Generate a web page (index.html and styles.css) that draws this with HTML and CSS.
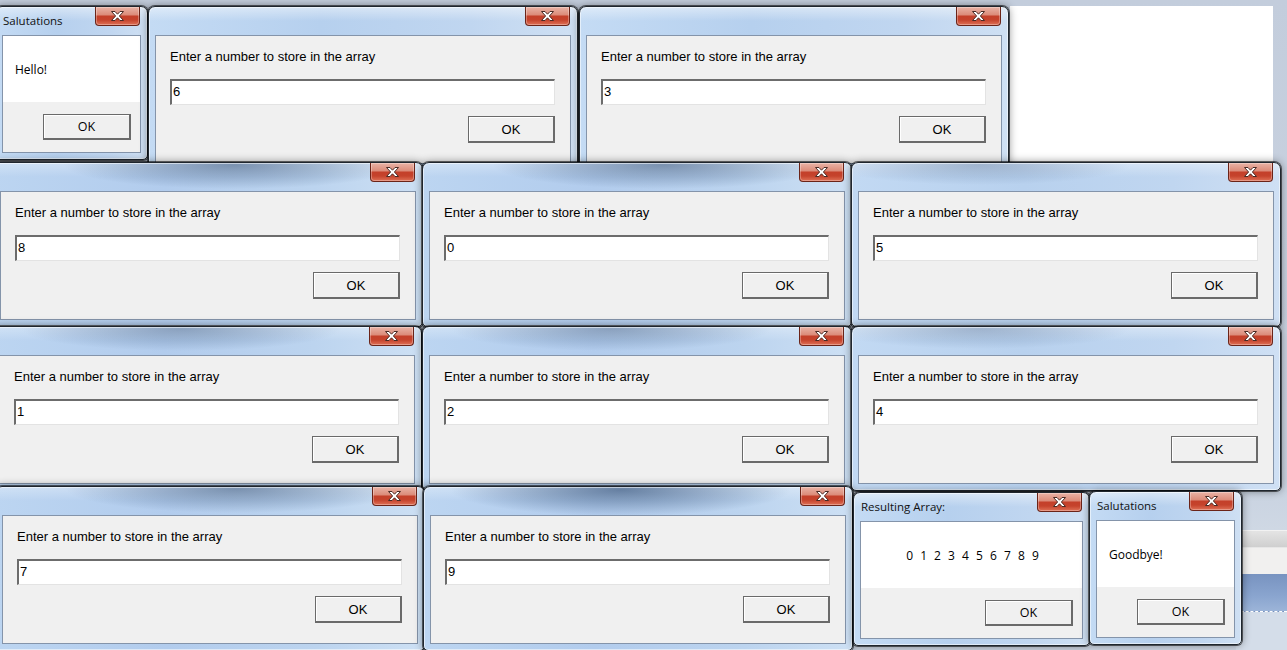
FILE: index.html
```html
<!DOCTYPE html>
<html lang="en">
<head>
<meta charset="utf-8">
<title>Array input dialogs</title>
<link rel="stylesheet" href="styles.css">
</head>
<body>
<div class="desktop">
  <div class="bg-white"></div>
  <div class="bg-app">
    <div class="app-top"></div>
    <div class="app-strip"></div>
    <div class="app-page"></div>
    <div class="app-band"></div>
    <div class="app-bottom"></div>
  </div>

  <!-- Row 1 -->
  <div class="win msg w1">
    <div class="titlebar"><span class="title">Salutations</span>
      <span class="close"><svg width="13" height="10" viewBox="0 0 13 10"><polygon points="0.5,0.5 4,0.5 6.5,3.2 9,0.5 12.5,0.5 8.4,5 12.5,9.5 9,9.5 6.5,6.8 4,9.5 0.5,9.5 4.6,5"/></svg></span></div>
    <div class="client">
      <div class="msg-body"><span>Hello!</span></div>
      <div class="msg-foot"><span class="btn">OK</span></div>
    </div>
  </div>

  <div class="win dlg w2">
    <div class="titlebar"><span class="close"><svg width="13" height="10" viewBox="0 0 13 10"><polygon points="0.5,0.5 4,0.5 6.5,3.2 9,0.5 12.5,0.5 8.4,5 12.5,9.5 9,9.5 6.5,6.8 4,9.5 0.5,9.5 4.6,5"/></svg></span></div>
    <div class="client">
      <p class="label">Enter a number to store in the array</p>
      <div class="field">6</div>
      <div class="actions"><span class="btn">OK</span></div>
    </div>
  </div>

  <div class="win dlg w3">
    <div class="titlebar"><span class="close"><svg width="13" height="10" viewBox="0 0 13 10"><polygon points="0.5,0.5 4,0.5 6.5,3.2 9,0.5 12.5,0.5 8.4,5 12.5,9.5 9,9.5 6.5,6.8 4,9.5 0.5,9.5 4.6,5"/></svg></span></div>
    <div class="client">
      <p class="label">Enter a number to store in the array</p>
      <div class="field">3</div>
      <div class="actions"><span class="btn">OK</span></div>
    </div>
  </div>

  <!-- Row 2 -->
  <div class="win dlg glass ga w4">
    <div class="titlebar"><span class="close"><svg width="13" height="10" viewBox="0 0 13 10"><polygon points="0.5,0.5 4,0.5 6.5,3.2 9,0.5 12.5,0.5 8.4,5 12.5,9.5 9,9.5 6.5,6.8 4,9.5 0.5,9.5 4.6,5"/></svg></span></div>
    <div class="client">
      <p class="label">Enter a number to store in the array</p>
      <div class="field">8</div>
      <div class="actions"><span class="btn">OK</span></div>
    </div>
  </div>

  <div class="win dlg glass ga w5">
    <div class="titlebar"><span class="close"><svg width="13" height="10" viewBox="0 0 13 10"><polygon points="0.5,0.5 4,0.5 6.5,3.2 9,0.5 12.5,0.5 8.4,5 12.5,9.5 9,9.5 6.5,6.8 4,9.5 0.5,9.5 4.6,5"/></svg></span></div>
    <div class="client">
      <p class="label">Enter a number to store in the array</p>
      <div class="field">0</div>
      <div class="actions"><span class="btn">OK</span></div>
    </div>
  </div>

  <div class="win dlg glass gc w6">
    <div class="titlebar"><span class="close"><svg width="13" height="10" viewBox="0 0 13 10"><polygon points="0.5,0.5 4,0.5 6.5,3.2 9,0.5 12.5,0.5 8.4,5 12.5,9.5 9,9.5 6.5,6.8 4,9.5 0.5,9.5 4.6,5"/></svg></span></div>
    <div class="client">
      <p class="label">Enter a number to store in the array</p>
      <div class="field">5</div>
      <div class="actions"><span class="btn">OK</span></div>
    </div>
  </div>

  <!-- Row 3 -->
  <div class="win dlg glass gb w7">
    <div class="titlebar"><span class="close"><svg width="13" height="10" viewBox="0 0 13 10"><polygon points="0.5,0.5 4,0.5 6.5,3.2 9,0.5 12.5,0.5 8.4,5 12.5,9.5 9,9.5 6.5,6.8 4,9.5 0.5,9.5 4.6,5"/></svg></span></div>
    <div class="client">
      <p class="label">Enter a number to store in the array</p>
      <div class="field">1</div>
      <div class="actions"><span class="btn">OK</span></div>
    </div>
  </div>

  <div class="win dlg glass gb w8">
    <div class="titlebar"><span class="close"><svg width="13" height="10" viewBox="0 0 13 10"><polygon points="0.5,0.5 4,0.5 6.5,3.2 9,0.5 12.5,0.5 8.4,5 12.5,9.5 9,9.5 6.5,6.8 4,9.5 0.5,9.5 4.6,5"/></svg></span></div>
    <div class="client">
      <p class="label">Enter a number to store in the array</p>
      <div class="field">2</div>
      <div class="actions"><span class="btn">OK</span></div>
    </div>
  </div>

  <div class="win dlg glass gc w9">
    <div class="titlebar"><span class="close"><svg width="13" height="10" viewBox="0 0 13 10"><polygon points="0.5,0.5 4,0.5 6.5,3.2 9,0.5 12.5,0.5 8.4,5 12.5,9.5 9,9.5 6.5,6.8 4,9.5 0.5,9.5 4.6,5"/></svg></span></div>
    <div class="client">
      <p class="label">Enter a number to store in the array</p>
      <div class="field">4</div>
      <div class="actions"><span class="btn">OK</span></div>
    </div>
  </div>

  <!-- Row 4 -->
  <div class="win dlg glass ga w10">
    <div class="titlebar"><span class="close"><svg width="13" height="10" viewBox="0 0 13 10"><polygon points="0.5,0.5 4,0.5 6.5,3.2 9,0.5 12.5,0.5 8.4,5 12.5,9.5 9,9.5 6.5,6.8 4,9.5 0.5,9.5 4.6,5"/></svg></span></div>
    <div class="client">
      <p class="label">Enter a number to store in the array</p>
      <div class="field">7</div>
      <div class="actions"><span class="btn">OK</span></div>
    </div>
  </div>

  <div class="win dlg glass gd w11">
    <div class="titlebar"><span class="close"><svg width="13" height="10" viewBox="0 0 13 10"><polygon points="0.5,0.5 4,0.5 6.5,3.2 9,0.5 12.5,0.5 8.4,5 12.5,9.5 9,9.5 6.5,6.8 4,9.5 0.5,9.5 4.6,5"/></svg></span></div>
    <div class="client">
      <p class="label">Enter a number to store in the array</p>
      <div class="field">9</div>
      <div class="actions"><span class="btn">OK</span></div>
    </div>
  </div>

  <div class="win msg w12">
    <div class="titlebar"><span class="title">Resulting Array:</span>
      <span class="close"><svg width="13" height="10" viewBox="0 0 13 10"><polygon points="0.5,0.5 4,0.5 6.5,3.2 9,0.5 12.5,0.5 8.4,5 12.5,9.5 9,9.5 6.5,6.8 4,9.5 0.5,9.5 4.6,5"/></svg></span></div>
    <div class="client">
      <div class="msg-body centered"><span class="digits">0 1 2 3 4 5 6 7 8 9</span></div>
      <div class="msg-foot"><span class="btn">OK</span></div>
    </div>
  </div>

  <div class="win msg w13">
    <div class="titlebar"><span class="title">Salutations</span>
      <span class="close"><svg width="13" height="10" viewBox="0 0 13 10"><polygon points="0.5,0.5 4,0.5 6.5,3.2 9,0.5 12.5,0.5 8.4,5 12.5,9.5 9,9.5 6.5,6.8 4,9.5 0.5,9.5 4.6,5"/></svg></span></div>
    <div class="client">
      <div class="msg-body"><span>Goodbye!</span></div>
      <div class="msg-foot"><span class="btn">OK</span></div>
    </div>
  </div>
</div>
</body>
</html>
```

FILE: styles.css
```css
* { box-sizing: border-box; }

html, body {
  margin: 0;
  padding: 0;
}

body {
  width: 1287px;
  height: 650px;
  overflow: hidden;
  font-family: "Liberation Sans", Arial, sans-serif;
  font-size: 13px;
  color: #000;
  background: #c7d0de;
}

.desktop {
  position: relative;
  width: 1287px;
  height: 650px;
  overflow: hidden;
  background: linear-gradient(180deg, #c3cddc 0, #c8d1df 40%, #cdd6e3 100%);
}

/* ---------- things behind the dialogs ---------- */
.bg-white {
  position: absolute;
  left: 1010px;
  top: 6px;
  width: 263px;
  height: 160px;
  background: #fff;
}

.bg-app {
  position: absolute;
  left: 1236px;
  top: 490px;
  width: 51px;
  height: 160px;
  display: flex;
  flex-direction: column;
}
.app-top { height: 40px; background: linear-gradient(180deg, #c9d3e1, #cfd8e4); }
.app-strip { height: 17px; border-top: 1px solid #f2f2f2; background: linear-gradient(180deg, #e4e4e4, #cfcfcf); }
.app-page { height: 27px; background: #f1f0ef; border-top: 1px solid #e6e6e6; }
.app-band { height: 38px; background: linear-gradient(180deg, #7893c0, #8aa5cf 60%, #9cb4d8); border-bottom: 1px dashed #ffffff; }
.app-bottom { flex: 1; background: #d4dde9; }

/* ---------- window frame ---------- */
.win {
  position: absolute;
  display: flex;
  flex-direction: column;
  padding: 0 6px 6px;
  border: 1px solid #1f262e;
  border-radius: 7px 7px 5px 5px;
  background:
    linear-gradient(180deg, rgba(255,255,255,.45) 0, rgba(255,255,255,0) 14px),
    linear-gradient(90deg, #c4dbf4 0, #b6d0ee 40%, #c0d6f0 75%, #cfe0f3 100%);
  box-shadow:
    inset 0 0 0 1px rgba(255,255,255,.55),
    0 0 0 1px rgba(0,0,0,.55),
    0 0 9px rgba(0,0,0,.45);
}

.glass.ga {
  background:
    radial-gradient(ellipse 170px 24px at 56% 2px, rgba(80,106,140,.65), rgba(80,106,140,0)),
    linear-gradient(180deg, rgba(255,255,255,.3) 0, rgba(255,255,255,0) 14px),
    linear-gradient(90deg, #bcd5f1 0, #b2cced 40%, #bcd4ef 75%, #cde0f4 100%);
}
.glass.gb {
  background:
    radial-gradient(ellipse 160px 22px at 44% 2px, rgba(80,106,140,.5), rgba(80,106,140,0)),
    linear-gradient(180deg, rgba(255,255,255,.3) 0, rgba(255,255,255,0) 14px),
    linear-gradient(90deg, #bcd5f1 0, #b2cced 40%, #bcd4ef 75%, #cde0f4 100%);
}
.glass.gc {
  background:
    radial-gradient(ellipse 150px 20px at 30% 2px, rgba(90,115,150,.4), rgba(90,115,150,0)),
    linear-gradient(180deg, rgba(255,255,255,.35) 0, rgba(255,255,255,0) 14px),
    linear-gradient(90deg, #c2d9f3 0, #b8d1ee 40%, #c0d6f0 75%, #cfe0f4 100%);
}
.glass.gd {
  background:
    radial-gradient(ellipse 170px 26px at 46% 3px, rgba(70,98,135,.75), rgba(70,98,135,0)),
    linear-gradient(180deg, rgba(255,255,255,.3) 0, rgba(255,255,255,0) 14px),
    linear-gradient(90deg, #bcd5f1 0, #b2cced 40%, #bcd4ef 75%, #cde0f4 100%);
}

.titlebar {
  position: relative;
  flex: none;
  height: 28px;
  display: flex;
  align-items: center;
}

.title {
  padding-left: 1px;
  margin-top: -1px;
  font-family: "Open Sans", "Noto Sans", sans-serif;
  font-size: 11.5px;
  color: #111;
}

.close {
  position: absolute;
  top: 0;
  right: 1px;
  width: 45px;
  height: 19px;
  display: flex;
  align-items: center;
  justify-content: center;
  border: 1px solid #6b2418;
  border-top: none;
  border-radius: 0 0 4px 4px;
  background: linear-gradient(180deg, #e9b3a6 0, #dc8d7b 42%, #c4402a 52%, #c5432c 72%, #df7157 100%);
  box-shadow: inset 0 0 0 1px rgba(255,255,255,.3);
}
.close svg polygon {
  fill: #ffffff;
  stroke: #4a2b25;
  stroke-width: 1;
}

/* ---------- client area ---------- */
.client {
  flex: 1;
  min-height: 0;
  display: flex;
  flex-direction: column;
  background: #f0f0f0;
  border: 1px solid #8494aa;
}

.label {
  margin: 13px 0 0 14px;
  font-size: 13px;
  line-height: 16px;
  white-space: nowrap;
}

.field {
  margin: 14px 0 0 14px;
  width: 385px;
  height: 26px;
  padding-left: 1px;
  background: #fff;
  border-style: solid;
  border-width: 2px 1px 1px 2px;
  border-color: #6c6c6c #e3e3e3 #e3e3e3 #6c6c6c;
  font-size: 13px;
  line-height: 22px;
}

.actions {
  display: flex;
  justify-content: flex-end;
  margin: 11px 15px 0 0;
}

.btn {
  display: flex;
  align-items: center;
  justify-content: center;
  width: 87px;
  height: 27px;
  background: #f0f0f0;
  border-style: solid;
  border-color: #6a6a6a;
  border-width: 1px 2px 2px 1px;
  box-shadow: inset 1px 1px 0 #ffffff;
  font-size: 13px;
}

/* ---------- message boxes ---------- */
.msg .client { font-family: "Open Sans", "Noto Sans", sans-serif; font-size: 12px; }

.msg-body {
  flex: none;
  height: 66px;
  display: flex;
  align-items: center;
  padding-left: 12px;
  background: #fff;
}
.msg-body.centered {
  justify-content: center;
  padding-left: 2px;
}
.digits {
  white-space: pre;
  word-spacing: 4px;
}

.msg-foot {
  flex: 1;
  display: flex;
  justify-content: flex-end;
  align-items: flex-start;
  padding: 12px 9px 0 0;
}
.msg-foot .btn {
  width: 88px;
  height: 26px;
  font-family: "Open Sans", "Noto Sans", sans-serif;
  font-size: 12.5px;
}

/* ---------- window sizes & desktop positions ---------- */
.dlg { width: 430px; height: 165px; }
.msg { height: 154px; }

.w1 { left: -5px; top: 6px; width: 153px; }
.w2 { left: 148px; top: 6px; }
.w3 { left: 579px; top: 6px; }

.w4 { left: -7px; top: 162px; }
.w5 { left: 422px; top: 162px; }
.w6 { left: 851px; top: 162px; }

.w7 { left: -8px; top: 326px; }
.w8 { left: 422px; top: 326px; }
.w9 { left: 851px; top: 326px; }

.w10 { left: -5px; top: 486px; }
.w11 { left: 423px; top: 486px; }
.w12 { left: 853px; top: 492px; width: 237px; }
.w13 { left: 1089px; top: 491px; width: 153px; }
```
